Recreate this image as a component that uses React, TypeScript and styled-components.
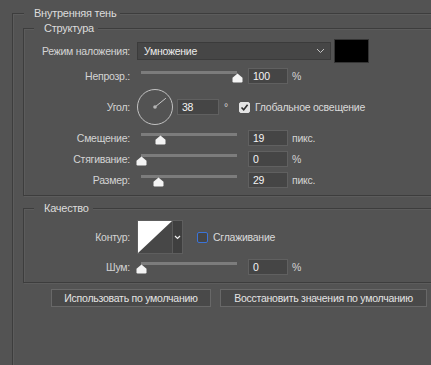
import React from 'react';
import styled, { createGlobalStyle } from 'styled-components';

const Global = createGlobalStyle`
  html, body { margin: 0; padding: 0; background: #535353; overflow: hidden; }
  body {
    width: 431px; height: 365px;
    font-family: "Liberation Sans", Arial, sans-serif;
    font-size: 10.5px; letter-spacing: -0.25px; color: #d6d6d6;
  }
  * { box-sizing: border-box; }
`;

const Page = styled.div`
  padding: 13px 0 0 12px;
  height: 365px;
  overflow: hidden;
`;

const Group = styled.section<{ $pad: string; $w: number; $h?: number; $mt?: number }>`
  position: relative;
  width: ${p => p.$w}px;
  ${p => (p.$h ? `height: ${p.$h}px;` : '')}
  margin-top: ${p => p.$mt ?? 0}px;
  border: 1px solid #3d3d3d;
  box-shadow: inset 1px 1px 0 #5c5c5c, 1px 1px 0 #5c5c5c;
  padding: ${p => p.$pad};
`;

const Legend = styled.span<{ $left: number }>`
  position: absolute;
  top: -8px;
  left: ${p => p.$left}px;
  padding: 0 4px 0 10px;
  background: #535353;
  color: #dcdcdc;
  font-size: 11px;
  line-height: 14px;
  white-space: nowrap;
`;

const Rows = styled.div`
  display: flex;
  flex-direction: column;
  gap: 5px;
`;

const Row = styled.div<{ $h: number }>`
  display: grid;
  grid-template-columns: 106px auto;
  column-gap: 7px;
  align-items: center;
  height: ${p => p.$h}px;
`;

const Label = styled.div`
  text-align: right;
  white-space: nowrap;
  color: #d4d4d4;
`;

const Controls = styled.div`
  display: flex;
  align-items: center;
`;

const Select = styled.div`
  width: 194px;
  height: 18px;
  background: #464646;
  border: 1px solid #3b3b3b;
  display: flex;
  align-items: center;
  justify-content: space-between;
  padding: 0 5px 0 6px;
  color: #ececec;
`;

const Swatch = styled.div`
  width: 35px;
  height: 24px;
  margin-left: 3px;
  background: #000;
  border: 1px solid #343434;
`;

const SliderBox = styled.div`
  position: relative;
  width: 106px;
  height: 16px;
`;

const Track = styled.div`
  position: absolute;
  left: 4px;
  top: 3px;
  width: 96px;
  height: 3px;
  background: #7c7c7c;
`;

const ThumbWrap = styled.div`
  position: absolute;
  top: 5px;
  width: 11px;
  height: 10px;
  display: flex;
`;

const NumInput = styled.div<{ $w?: number; $ml?: number }>`
  width: ${p => p.$w ?? 40}px;
  height: 16px;
  margin-left: ${p => p.$ml ?? 5}px;
  background: #454545;
  border: 1px solid #606060;
  color: #f4f4f4;
  padding-left: 4px;
  line-height: 14px;
`;

const Unit = styled.span<{ $ml?: number }>`
  margin-left: ${p => p.$ml ?? 4}px;
  color: #d4d4d4;
`;

const CheckBox = styled.div<{ $checked?: boolean; $focus?: boolean; $ml: number }>`
  width: 11px;
  height: 11px;
  margin-left: ${p => p.$ml}px;
  border-radius: 2px;
  display: flex;
  align-items: center;
  justify-content: center;
  background: ${p => (p.$checked ? '#e4e4e4' : '#464646')};
  border: 1px solid ${p => (p.$focus ? '#3c74d8' : p.$checked ? '#e4e4e4' : '#6a6a6a')};
`;

const CheckLabel = styled.span`
  margin-left: 5px;
  color: #dadada;
  white-space: nowrap;
`;

const Contour = styled.div`
  display: flex;
  width: 46px;
  height: 34px;
  border: 1px solid #5e5e5e;
  background: #3f3f3f;
`;

const ContourArrow = styled.div`
  flex: 1;
  display: flex;
  align-items: center;
  justify-content: center;
  border-left: 1px solid #5a5a5a;
`;

const ButtonRow = styled.div`
  display: flex;
  gap: 9px;
  margin-top: 6px;
  padding-left: 28px;
`;

const Button = styled.div<{ $w: number }>`
  width: ${p => p.$w}px;
  height: 18px;
  background: #494949;
  border: 1px solid #686868;
  color: #e4e4e4;
  display: flex;
  align-items: center;
  justify-content: center;
  white-space: nowrap;
`;

const Chevron = () => (
  <svg width="9" height="6" viewBox="0 0 9 6">
    <path d="M1 1 L4.5 4.5 L8 1" fill="none" stroke="#c4c4c4" strokeWidth="1" />
  </svg>
);

const Thumb = () => (
  <svg width="11" height="10" viewBox="0 0 11 10">
    <path d="M5.5 0.5 L10.5 4.8 V8.3 Q10.5 9.5 9.3 9.5 H1.7 Q0.5 9.5 0.5 8.3 V4.8 Z" fill="#f4f4f4" />
  </svg>
);

const Slider = ({ value }: { value: number }) => (
  <SliderBox>
    <Track />
    <ThumbWrap style={{ left: 4 + value * 96 - 5.5 }}>
      <Thumb />
    </ThumbWrap>
  </SliderBox>
);

const Dial = ({ angle }: { angle: number }) => {
  const r = (angle * Math.PI) / 180;
  const x2 = 18 + Math.cos(r) * 14;
  const y2 = 18 - Math.sin(r) * 14;
  return (
    <svg width="36" height="36" viewBox="0 0 36 36">
      <circle cx="18" cy="18" r="17.5" fill="none" stroke="#c2c2c2" strokeWidth="1" />
      <line x1="18" y1="18" x2={x2} y2={y2} stroke="#c8c8c8" strokeWidth="1" />
      <circle cx="18" cy="18" r="1.8" fill="#b4b4b4" />
    </svg>
  );
};

const CheckMark = () => (
  <svg width="9" height="9" viewBox="0 0 9 9">
    <path d="M1.5 4.5 L3.7 6.8 L7.6 1.8" fill="none" stroke="#2f2f2f" strokeWidth="1.6" />
  </svg>
);

const ContourCurve = () => (
  <svg width="34" height="32" viewBox="0 0 34 32">
    <rect width="34" height="32" fill="#ffffff" />
    <path d="M0 32 L34 0 V32 Z" fill="#474747" />
  </svg>
);

const SmallChevron = () => (
  <svg width="7" height="5" viewBox="0 0 7 5">
    <path d="M1 1 L3.5 3.5 L6 1" fill="none" stroke="#f0f0f0" strokeWidth="1.2" />
  </svg>
);

export default function App() {
  return (
    <>
      <Global />
      <Page>
        <Group $w={440} $h={353} $pad="14px 0 0 10px">
          <Legend $left={11}>Внутренняя тень</Legend>

          <Group $w={420} $pad="10px 0 7px 0">
            <Legend $left={10}>Структура</Legend>
            <Rows>
              <Row $h={24}>
                <Label>Режим наложения:</Label>
                <Controls>
                  <Select>
                    <span>Умножение</span>
                    <Chevron />
                  </Select>
                  <Swatch />
                </Controls>
              </Row>
              <Row $h={16}>
                <Label>Непрозр.:</Label>
                <Controls>
                  <Slider value={1} />
                  <NumInput>100</NumInput>
                  <Unit>%</Unit>
                </Controls>
              </Row>
              <Row $h={36}>
                <Label>Угол:</Label>
                <Controls>
                  <Dial angle={39} />
                  <NumInput $w={42} $ml={4}>38</NumInput>
                  <Unit $ml={5}>°</Unit>
                  <CheckBox $checked $ml={11}>
                    <CheckMark />
                  </CheckBox>
                  <CheckLabel>Глобальное освещение</CheckLabel>
                </Controls>
              </Row>
              <Row $h={16}>
                <Label>Смещение:</Label>
                <Controls>
                  <Slider value={0.2} />
                  <NumInput>19</NumInput>
                  <Unit>пикс.</Unit>
                </Controls>
              </Row>
              <Row $h={16}>
                <Label>Стягивание:</Label>
                <Controls>
                  <Slider value={0} />
                  <NumInput>0</NumInput>
                  <Unit>%</Unit>
                </Controls>
              </Row>
              <Row $h={16}>
                <Label>Размер:</Label>
                <Controls>
                  <Slider value={0.18} />
                  <NumInput>29</NumInput>
                  <Unit>пикс.</Unit>
                </Controls>
              </Row>
            </Rows>
          </Group>

          <Group $w={420} $mt={12} $pad="11px 0 7px 0">
            <Legend $left={10}>Качество</Legend>
            <Rows>
              <Row $h={34}>
                <Label>Контур:</Label>
                <Controls>
                  <Contour>
                    <ContourCurve />
                    <ContourArrow>
                      <SmallChevron />
                    </ContourArrow>
                  </Contour>
                  <CheckBox $focus $ml={14} />
                  <CheckLabel>Сглаживание</CheckLabel>
                </Controls>
              </Row>
              <Row $h={16}>
                <Label>Шум:</Label>
                <Controls>
                  <Slider value={0} />
                  <NumInput>0</NumInput>
                  <Unit>%</Unit>
                </Controls>
              </Row>
            </Rows>
          </Group>

          <ButtonRow>
            <Button $w={160}>Использовать по умолчанию</Button>
            <Button $w={207}>Восстановить значения по умолчанию</Button>
          </ButtonRow>
        </Group>
      </Page>
    </>
  );
}
